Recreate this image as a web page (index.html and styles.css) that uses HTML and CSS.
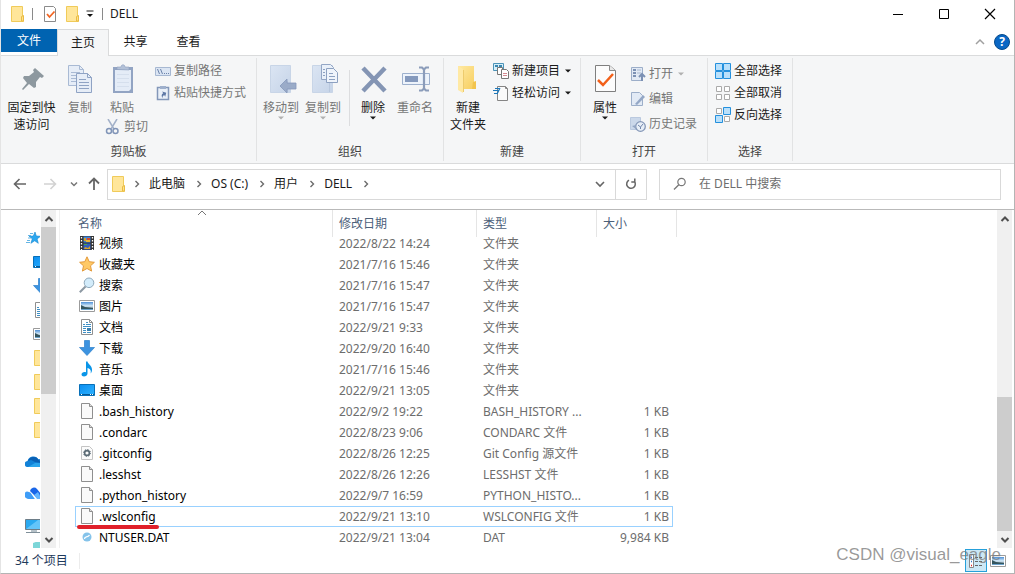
FILE: index.html
```html
<!DOCTYPE html>
<html lang="zh-CN">
<head>
<meta charset="utf-8">
<title>DELL</title>
<link rel="stylesheet" href="styles.css">
</head>
<body>
<svg class="defs" aria-hidden="true">
  <defs>
    <linearGradient id="gBlue" x1="0" y1="0" x2="1" y2="1"><stop offset="0" stop-color="#dbe5f3"/><stop offset="1" stop-color="#c6d4e8"/></linearGradient>
    <linearGradient id="gFolder" x1="0" y1="0" x2="1" y2="1"><stop offset="0" stop-color="#ffe9a2"/><stop offset="1" stop-color="#f6cd5c"/></linearGradient>
    <linearGradient id="gScreen" x1="0" y1="0" x2="1" y2="1"><stop offset="0" stop-color="#0b8df0"/><stop offset="1" stop-color="#2fb4ff"/></linearGradient>
    <linearGradient id="gSky" x1="0" y1="0" x2="0" y2="1"><stop offset="0" stop-color="#4d8fd6"/><stop offset=".5" stop-color="#d8ecf8"/><stop offset="1" stop-color="#2c4a5c"/></linearGradient>
  </defs>
  <symbol id="folder" viewBox="0 0 16 16"><path d="M1.500 .5h11v10.500h1v4.500h-12z" fill="#ffe69a" stroke="#f0cb5a"/><path d="M11.500 15v-4.500l2-1v5.500z" fill="#ffe08a" stroke="#e9bc43"/></symbol>
  <symbol id="file" viewBox="0 0 16 16"><path d="M2.500 .5h8l3 3v12h-11z" fill="#fafafa" stroke="#8f8f8f"/><path d="M10.500 .5v3h3" fill="#ddd" stroke="#8f8f8f"/></symbol>
  <symbol id="check" viewBox="0 0 16 16"><path d="M2.500 .5h9l2 2v13h-11z" fill="#fff" stroke="#8b8b8b"/><path d="M5 8l2.500 3 5-5.500" fill="none" stroke="#f26522" stroke-width="1.800"/></symbol>
  <symbol id="video" viewBox="0 0 16 16"><path d="M1 1h14v14H1z" fill="#343434"/><path d="M4.500 1.500h7v6h-7z" fill="#3f83db"/><path d="M4.500 8.500h7v6h-7z" fill="#325fc0"/><path d="M5 3h2v3H5zM6 12l3 1 2-2v3H5z" fill="#d6a128"/><path d="M8 3h3v2H8z" fill="#d94c2c"/><path d="M7 5h4v2H7z" fill="#e7b73b"/><path d="M5 9h3v1H5z" fill="#4eaa46"/><path d="M2.500 2v13M13.500 2v13" stroke="#fff" stroke-width="1.300" stroke-dasharray="1.500 1.500"/></symbol>
  <symbol id="star" viewBox="0 0 16 16"><path d="M8 .8l2.200 4.900 5.200.6-3.900 3.500 1.100 5.300L8 12.500l-4.600 2.600 1.100-5.300L.6 6.300l5.200-.6z" fill="#ffc966" stroke="#e39a3b"/></symbol>
  <symbol id="search" viewBox="0 0 16 16"><path d="M.8 15.200l6-6" stroke="#8d99a3" stroke-width="2"/><circle cx="10" cy="5.800" r="4.800" fill="#d3ecfb" stroke="#8faabd"/></symbol>
  <symbol id="picture" viewBox="0 0 16 16"><path d="M.5 2.500h15v11H.5z" fill="#fff" stroke="#9b9b9b"/><path d="M2 4h12v8H2z" fill="url(#gSky)"/><path d="M2 7l4 2 8 1v1H2z" fill="#35565f"/><path d="M2 11h12v1H2z" fill="#6da3cc"/></symbol>
  <symbol id="doc" viewBox="0 0 16 16"><path d="M2.500 .5h8l3 3v12h-11z" fill="#fff" stroke="#8f8f8f"/><path d="M10.500 .5v3h3" fill="none" stroke="#8f8f8f"/><path d="M4 5.500h2M7 3.500h2M7 5.500h5M4 7.500h8M4 9.500h3M4 11.500h3M4 13.500h3" stroke="#3f8fc4"/><path d="M8 9h4v3H8z" fill="#3b7fae"/><path d="M8 13.500h4" stroke="#3f8fc4"/></symbol>
  <symbol id="down" viewBox="0 0 16 16"><path d="M5.500 .5h5v7h5L8 15.500.5 7.500h5z" fill="#3c93e0" stroke="#2c7fcb" stroke-width=".7"/></symbol>
  <symbol id="music" viewBox="0 0 16 16"><path d="M7 .5h1.500C9 3.500 13.500 4.500 13 9.500c-.2 1.500-1 2.500-1.500 3 1-3-.5-5-3-5.500v5.500c0 3.500-6 4-6 1 0-2.200 2.500-3 4.500-2.200z" fill="#0a95e8"/></symbol>
  <symbol id="desktop" viewBox="0 0 16 16"><path d="M.5 2.500h15v11H.5z" fill="url(#gScreen)" stroke="#0870b8"/><path d="M1 12.500h14" stroke="#075a96"/><path d="M2 12.500h1M11 12.500h1M13 12.500h1" stroke="#fff"/></symbol>
  <symbol id="gear" viewBox="0 0 16 16"><path d="M2.500 1.500h8l3 3v10h-11z" fill="#fbfbfb" stroke="#c4c4c4"/><circle cx="8" cy="8" r="2.400" fill="none" stroke="#5b6b75" stroke-width="1.600"/><circle cx="8" cy="8" r="3.500" fill="none" stroke="#5b6b75" stroke-dasharray="1.200 1.550"/></symbol>
  <symbol id="dat" viewBox="0 0 16 16"><circle cx="8" cy="8" r="4.500" fill="#85c3ea"/><path d="M5.500 10c0-3 3-1 5-4" fill="none" stroke="#fff" stroke-width="1.300"/></symbol>
  <symbol id="pinstar" viewBox="0 0 16 16"><path d="M9 2l1.300 4 4.200.3-3.400 2.600 1.200 4.400-3.600-2.500-3.800 2.500 1.400-4.500L3 6.300l4.300-.3z" fill="#2aa7f0" stroke="#1787cf" stroke-width=".6"/><path d="M4 3.500h3M2 5.500h3M2 8h3M1 10.500h3M0 12.500h4" stroke="#55aee2" stroke-width=".9"/></symbol>
  <symbol id="cloud" viewBox="0 0 20 16"><path d="M3 13a3 3 0 0 1-.5-6 6 6 0 0 1 11-1.500 4 4 0 0 1 3 7.500z" fill="#1181d7"/><path d="M3 7a6 6 0 0 1 10.500-1.500L16 9l-6-1-4-2z" fill="#0a60b4"/><path d="M3 13l7-4 7 0 0 4z" fill="#2aa4ec"/></symbol>
  <symbol id="cloud2" viewBox="0 0 20 16"><path d="M1 12a3 3 0 0 1 3-6c2 0 4 5 6 7H4a4 4 0 0 1-3-1z" fill="#3f9df7"/><path d="M5 5a4 4 0 0 1 7-2l4 5a3 3 0 0 1 1 5h-4z" fill="#1a66e8"/><path d="M9 9l4-3 4 7h-5z" fill="#63b5ff"/></symbol>
  <symbol id="pc" viewBox="0 0 20 16"><path d="M.5 1.500h17v10H.5z" fill="#2aa9f0" stroke="#6d7d88"/><path d="M1 11L13 2h4v9z" fill="#63c5fa"/><path d="M6 12h6v2H6z" fill="#b7c2c9"/><path d="M1 14.500h16" stroke="#7f8f99"/></symbol>
  <symbol id="cube" viewBox="0 0 20 16"><path d="M8 1l8-3 4 2v10l-8 2-4-4z" fill="#7cd6d8"/></symbol>
  <symbol id="chev" viewBox="0 0 8 8"><path d="M2.500 1l3 3-3 3" fill="none" stroke="#6b6b6b" stroke-width="1.400"/></symbol>
  <symbol id="arrUp" viewBox="0 0 10 8"><path d="M1.500 6L5 2.500 8.500 6" fill="none" stroke="#4f4f4f" stroke-width="2"/></symbol>
  <symbol id="arrDown" viewBox="0 0 10 8"><path d="M1.500 2L5 5.500 8.500 2" fill="none" stroke="#4f4f4f" stroke-width="2"/></symbol>
  <symbol id="tri" viewBox="0 0 6 4"><path d="M0 .5h6L3 3.500z" fill="currentColor"/></symbol>
</svg>

<div class="window">
  <header class="titlebar">
    <svg class="i16"><use href="#folder"/></svg>
    <span class="rule"></span>
    <button class="quick" aria-label="属性"><svg class="i16"><use href="#check"/></svg></button>
    <button class="quick" aria-label="新建文件夹"><svg class="i16"><use href="#folder"/></svg></button>
    <button class="quick more" aria-label="自定义快速访问工具栏"><svg width="8" height="8" viewBox="0 0 8 8"><path d="M.5 1h7" stroke="#222"/><path d="M1 4h6L4 7z" fill="#111"/></svg></button>
    <span class="rule"></span>
    <h1>DELL</h1>
    <div class="controls">
      <button aria-label="最小化"><svg width="12" height="12"><path d="M1 6.500h10" stroke="#000"/></svg></button>
      <button aria-label="最大化"><svg width="12" height="12"><path d="M1.500 1.500h9v9h-9z" fill="none" stroke="#000"/></svg></button>
      <button aria-label="关闭"><svg width="12" height="12"><path d="M1 1l10 10M11 1L1 11" stroke="#000" stroke-width="1.200"/></svg></button>
    </div>
  </header>

  <nav class="tabs">
    <button class="tab file">文件</button>
    <button class="tab active">主页</button>
    <button class="tab">共享</button>
    <button class="tab">查看</button>
    <button class="collapse" aria-label="最小化功能区"><svg width="10" height="8"><path d="M1 6l4-4 4 4" fill="none" stroke="#a0a0a0" stroke-width="1.500"/></svg></button>
    <button class="help" aria-label="帮助">?</button>
  </nav>

  <section class="ribbon">
    <div class="group clip">
      <div class="tools">
        <button class="big wide"><svg class="i32" viewBox="0 0 32 32"><path d="M19 4l9 8-2 2-2-1-4 5 0 5-2 1-5-4-6 6-1-1 5-6-4-5 1-2 5 0 5-4-1-2z" fill="#8d989f"/></svg>固定到快<br>速访问</button>
        <button class="big off"><svg class="i32" viewBox="0 0 32 32"><path d="M4.500 1.500h11l4 4v16h-15z" fill="#e6edf7" stroke="#a9bad4"/><path d="M15.500 1.500v4h4M7 8.500h9M7 11.500h5M7 14.500h5M7 17.500h5" stroke="#a9bad4" fill="none"/><path d="M12.500 9.500h11l4 4v15h-15z" fill="#e6edf7" stroke="#8fa3c4"/><path d="M23.500 9.500v4h4M15 15.500h7M15 18.500h10M15 21.500h10M15 24.500h10" stroke="#8fa3c4" fill="none"/></svg>复制</button>
        <div class="paste">
          <button class="big off"><svg class="i32" viewBox="0 0 32 32"><path d="M7 3h20v26H7z" fill="#92a4c3"/><path d="M9 6h16v19l-2 2H9z" fill="#e4ecf7"/><path d="M11 5.500V3h4c0-3 4-3 4 0h4v3z" fill="#b2c0d7" stroke="#8d9fbe" stroke-width=".6"/><path d="M11 10.500h12M11 14.500h12M11 18.500h12M11 22.500h12" stroke="#d5dfed"/></svg>粘贴</button>
          <button class="row off cut"><svg class="i16" viewBox="0 0 16 16"><path d="M3 0l6 10M12 0L6 10" stroke="#a3b1c9" stroke-width="1.500"/><circle cx="4" cy="12" r="2.500" fill="none" stroke="#8195b8" stroke-width="1.500"/><circle cx="10.500" cy="12" r="2.500" fill="none" stroke="#8195b8" stroke-width="1.500"/></svg>剪切</button>
        </div>
        <div class="stack">
          <button class="row off"><svg class="i16" viewBox="0 0 16 16"><path d="M.5 4.500h15v8H.5z" fill="#dbe5f3" stroke="#a7b8d2"/><path d="M2.500 6l2 5M5.500 6l2 5" stroke="#6c83aa"/><path d="M9 10.500h1M11 10.500h1M13 10.500h1" stroke="#6c83aa"/></svg>复制路径</button>
          <button class="row off"><svg class="i16" viewBox="0 0 16 16"><path d="M2.500 2.500h11v12h-11z" fill="#eaf0f8" stroke="#8397b9" stroke-width="1.500"/><path d="M5 1h6v3H5z" fill="#9fb0cc"/><path d="M5.500 12.500c0-3 1-4 3-4v-2l3 3-3 3v-2c-1 0-2 0-3 2z" fill="#5f79a6" transform="rotate(-30 8 9)"/></svg>粘贴快捷方式</button>
        </div>
      </div>
      <h2>剪贴板</h2>
    </div>

    <div class="group organize">
      <div class="tools">
        <button class="big off"><svg class="i32" viewBox="0 0 32 32"><path d="M5.500 1.500h20v27h-20z" fill="url(#gBlue)" stroke="#c8d5e7"/><path d="M22.500 17v11" stroke="#b9c8de"/><path d="M15 22l7-7v4h9v6h-9v4z" fill="#9aabc8" stroke="#8598ba" stroke-width=".8"/></svg>移动到<svg class="tri"><use href="#tri"/></svg></button>
        <button class="big off"><svg class="i32" viewBox="0 0 32 32"><path d="M5.500 1.500h20v27h-20z" fill="url(#gBlue)" stroke="#c8d5e7"/><path d="M22.500 17v11" stroke="#b9c8de"/><path d="M14.500 .5h9l3 3v12h-12z" fill="#e9f0f9" stroke="#93a6c5"/><path d="M19.500 4.500h7l4 4v10h-11z" fill="#eff4fb" stroke="#8da1c1"/><path d="M22 9.500h4M22 12.500h6M22 15.500h6M16 5.500h2M16 8.500h2M16 11.500h2" stroke="#8da1c1"/></svg>复制到<svg class="tri"><use href="#tri"/></svg></button>
        <span class="split"></span>
        <button class="big"><svg class="i32" viewBox="0 0 32 32"><path d="M6 4l22 23M28 4L6 27" stroke="#8495b4" stroke-width="4.500"/></svg>删除<svg class="tri"><use href="#tri"/></svg></button>
        <button class="big off"><svg class="i32" viewBox="0 0 32 32"><path d="M3.500 9.500h27v11h-27z" fill="#edf3fb" stroke="#9db0cd"/><path d="M6 12h13v6H6z" fill="#8499bd"/><path d="M20 3.500h3l2 2 2-2h3M25 5v20M20 26.500h3l2-2 2 2h3" fill="none" stroke="#8b9cba" stroke-width="2.200"/></svg>重命名</button>
      </div>
      <h2>组织</h2>
    </div>

    <div class="group create">
      <div class="tools">
        <button class="big"><svg class="i32" viewBox="0 0 32 32"><path d="M6 2h16v17h2v6H6z" fill="url(#gFolder)"/><path d="M6 2l5 3v24l-5-3z" fill="#ffe9a4"/><path d="M11.500 6v22" stroke="#edcb6d"/><path d="M20 25l1-7 3-1v8z" fill="#f2c44e"/></svg>新建<br>文件夹</button>
        <div class="stack">
          <button class="row"><svg class="i16" viewBox="0 0 16 16"><path d="M.5 .5h10v7H.5z" fill="#d5effa" stroke="#4b93b8"/><path d="M2 2h3v2H2zM6 2h3v2H6z" fill="#3a86b0"/><path d="M4.500 4.500h5v7h-5z" fill="#fff" stroke="#777"/><path d="M8.500 6.500h5l2 2v7h-7z" fill="#fff" stroke="#777"/><path d="M10 10.500h4M10 12.500h4" stroke="#d58b93"/></svg>新建项目<svg class="tri"><use href="#tri"/></svg></button>
          <button class="row"><svg class="i16" viewBox="0 0 16 16"><path d="M4.500 1.500h8l2 2v12h-10z" fill="#fafafa" stroke="#858585"/><path d="M12.500 1.500v2h2" fill="none" stroke="#858585"/><path d="M2 3.500h5M0 5.500h6M1 8.500h4M7 3l-3 6" stroke="#1e78ba" stroke-width="1.200"/></svg>轻松访问<svg class="tri"><use href="#tri"/></svg></button>
        </div>
      </div>
      <h2>新建</h2>
    </div>

    <div class="group open">
      <div class="tools">
        <button class="big"><svg class="i32" viewBox="0 0 32 32"><path d="M6.500 1.500h14l6 5v21h-20z" fill="#fcfcfc" stroke="#7f7f7f"/><path d="M20.500 1.500v5h6" fill="#e8e8e8" stroke="#8a8a8a"/><path d="M9 16l5 5 10-11" fill="none" stroke="#f2601a" stroke-width="2.500"/></svg>属性<svg class="tri"><use href="#tri"/></svg></button>
        <div class="stack loose">
          <button class="row off"><svg class="i16" viewBox="0 0 16 16"><path d="M1.500 1.500h11v13h-11z" fill="#e2eaf5" stroke="#9caec9"/><path d="M3 4h3M3 7h3M3 10h3" stroke="#7c91b4" stroke-width="2"/><path d="M7 4h4M7 7h4" stroke="#a7b7d0"/><path d="M12 15V9M9 11l3-3 3 3" fill="none" stroke="#7c91b4" stroke-width="2"/></svg>打开<svg class="tri"><use href="#tri"/></svg></button>
          <button class="row off"><svg class="i16" viewBox="0 0 16 16"><path d="M1.500 1.500h8l3 3v10h-11z" fill="#e2eaf5" stroke="#9caec9"/><path d="M5 13l8-9 2 2-8 8z" fill="#94a7c6"/></svg>编辑</button>
          <button class="row off"><svg class="i16" viewBox="0 0 16 16"><path d="M.5 1.500h10v12H.5z" fill="#cbd8ea" stroke="#bac9df"/><circle cx="10.500" cy="10.500" r="4.800" fill="#e7eef7" stroke="#8497b7" stroke-width="1.300"/><path d="M8 9l2.500 2 2.500-3M10.500 11v2" fill="none" stroke="#7287ab"/><path d="M2 10l4-1v4z" fill="#92a5c3"/></svg>历史记录</button>
        </div>
      </div>
      <h2>打开</h2>
    </div>

    <div class="group select">
      <div class="tools">
        <div class="stack">
          <button class="row"><svg class="i16" viewBox="0 0 16 16"><path d="M.5 .5h7v7h-7zM8.500 .5h7v7h-7zM.5 8.500h7v7h-7zM8.500 8.500h7v7h-7z" fill="#b9e0fb" stroke="#2490dd"/></svg>全部选择</button>
          <button class="row"><svg class="i16" viewBox="0 0 16 16"><path d="M1.500 1.500h5v5h-5zM9.500 1.500h5v5h-5zM1.500 9.500h5v5h-5zM9.500 9.500h5v5h-5z" fill="#fff" stroke="#aaa"/></svg>全部取消</button>
          <button class="row"><svg class="i16" viewBox="0 0 16 16"><path d="M1.500 1.500h5v5h-5zM9.500 9.500h5v5h-5z" fill="#fff" stroke="#aaa"/><path d="M8.500 .5h7v7h-7zM.5 8.500h7v7h-7z" fill="#b9e0fb" stroke="#2490dd"/></svg>反向选择</button>
        </div>
      </div>
      <h2>选择</h2>
    </div>
  </section>

  <div class="navbar">
    <button class="arrow" aria-label="后退"><svg width="14" height="12"><path d="M13 6H2M6.500 1L1.500 6l5 5" fill="none" stroke="#666" stroke-width="1.600"/></svg></button>
    <button class="arrow" aria-label="前进"><svg width="14" height="12"><path d="M1 6h11M7.500 1l5 5-5 5" fill="none" stroke="#d2d2d2" stroke-width="1.600"/></svg></button>
    <button class="recent" aria-label="最近位置"><svg width="8" height="6"><path d="M1 1.500l3 3 3-3" fill="none" stroke="#777" stroke-width="1.500"/></svg></button>
    <button class="up" aria-label="上移"><svg width="12" height="14"><path d="M6 13V2M1 6.500l5-5 5 5" fill="none" stroke="#666" stroke-width="1.800"/></svg></button>
    <div class="address">
      <svg class="i16"><use href="#folder"/></svg>
      <svg class="sep"><use href="#chev"/></svg>
      <a href="#pc">此电脑</a><svg class="sep"><use href="#chev"/></svg>
      <a href="#c">OS (C:)</a><svg class="sep"><use href="#chev"/></svg>
      <a href="#users">用户</a><svg class="sep"><use href="#chev"/></svg>
      <a href="#dell">DELL</a><svg class="sep"><use href="#chev"/></svg>
      <button class="drop" aria-label="以前的位置"><svg width="10" height="8"><path d="M1 2l4 4 4-4" fill="none" stroke="#666" stroke-width="1.600"/></svg></button>
      <button class="refresh" aria-label="刷新"><svg width="12" height="12"><path d="M9.500 3.500A4.300 4.300 0 1 1 4 2.200M9.800 .5v3.500H6.300" fill="none" stroke="#666" stroke-width="1.500"/></svg></button>
    </div>
    <label class="find">
      <svg width="14" height="14"><circle cx="8.500" cy="5" r="3.700" fill="none" stroke="#777" stroke-width="1.200"/><path d="M5.800 7.700L1 12.500" stroke="#777" stroke-width="1.300"/></svg>
      <input type="search" placeholder="在 DELL 中搜索" aria-label="搜索">
    </label>
  </div>

  <main class="content">
    <aside class="tree">
      <ul>
        <li class="pinned"><svg class="i16"><use href="#pinstar"/></svg></li>
        <li><svg class="i16"><use href="#desktop"/></svg></li>
        <li><svg class="i16"><use href="#down"/></svg></li>
        <li><svg class="i16"><use href="#doc"/></svg></li>
        <li><svg class="i16"><use href="#picture"/></svg></li>
        <li><svg class="i16"><use href="#folder"/></svg></li>
        <li><svg class="i16"><use href="#folder"/></svg></li>
        <li><svg class="i16"><use href="#folder"/></svg></li>
        <li><svg class="i16"><use href="#folder"/></svg></li>
        <li class="root first"><svg class="i20"><use href="#cloud"/></svg></li>
        <li class="root"><svg class="i20"><use href="#cloud2"/></svg></li>
        <li class="root"><svg class="i20"><use href="#pc"/></svg></li>
        <li class="child"><svg class="i20"><use href="#cube"/></svg></li>
      </ul>
      <div class="scroll">
        <svg class="sarrow"><use href="#arrUp"/></svg>
        <div class="track"><div class="thumb top"></div></div>
        <svg class="sarrow"><use href="#arrDown"/></svg>
      </div>
    </aside>

    <div class="list">
      <svg class="sorted" viewBox="0 0 10 6"><path d="M1 5l4-4 4 4" fill="none" stroke="#777"/></svg>
      <table>
        <colgroup><col class="c-name"><col class="c-date"><col class="c-type"><col class="c-size"></colgroup>
        <thead><tr><th>名称</th><th>修改日期</th><th>类型</th><th>大小</th></tr></thead>
        <tbody>
          <tr><td><svg class="i16"><use href="#video"/></svg>视频</td><td>2022/8/22 14:24</td><td>文件夹</td><td></td></tr>
          <tr><td><svg class="i16"><use href="#star"/></svg>收藏夹</td><td>2021/7/16 15:46</td><td>文件夹</td><td></td></tr>
          <tr><td><svg class="i16"><use href="#search"/></svg>搜索</td><td>2021/7/16 15:47</td><td>文件夹</td><td></td></tr>
          <tr><td><svg class="i16"><use href="#picture"/></svg>图片</td><td>2021/7/16 15:47</td><td>文件夹</td><td></td></tr>
          <tr><td><svg class="i16"><use href="#doc"/></svg>文档</td><td>2022/9/21 9:33</td><td>文件夹</td><td></td></tr>
          <tr><td><svg class="i16"><use href="#down"/></svg>下载</td><td>2022/9/20 16:40</td><td>文件夹</td><td></td></tr>
          <tr><td><svg class="i16"><use href="#music"/></svg>音乐</td><td>2021/7/16 15:46</td><td>文件夹</td><td></td></tr>
          <tr><td><svg class="i16"><use href="#desktop"/></svg>桌面</td><td>2022/9/21 13:05</td><td>文件夹</td><td></td></tr>
          <tr><td><svg class="i16"><use href="#file"/></svg>.bash_history</td><td>2022/9/2 19:22</td><td>BASH_HISTORY ...</td><td>1 KB</td></tr>
          <tr><td><svg class="i16"><use href="#file"/></svg>.condarc</td><td>2022/8/23 9:06</td><td>CONDARC 文件</td><td>1 KB</td></tr>
          <tr><td><svg class="i16"><use href="#gear"/></svg>.gitconfig</td><td>2022/8/26 12:25</td><td>Git Config 源文件</td><td>1 KB</td></tr>
          <tr><td><svg class="i16"><use href="#file"/></svg>.lesshst</td><td>2022/8/26 12:26</td><td>LESSHST 文件</td><td>1 KB</td></tr>
          <tr><td><svg class="i16"><use href="#file"/></svg>.python_history</td><td>2022/9/7 16:59</td><td>PYTHON_HISTO...</td><td>1 KB</td></tr>
          <tr class="selected"><td><svg class="i16"><use href="#file"/></svg>.wslconfig<span class="mark"></span></td><td>2022/9/21 13:10</td><td>WSLCONFIG 文件</td><td>1 KB</td></tr>
          <tr><td><svg class="i16"><use href="#dat"/></svg>NTUSER.DAT</td><td>2022/9/21 13:04</td><td>DAT</td><td>9,984 KB</td></tr>
        </tbody>
      </table>
    </div>

    <div class="scroll">
      <svg class="sarrow"><use href="#arrUp"/></svg>
      <div class="track"><div class="thumb bottom"></div></div>
      <svg class="sarrow"><use href="#arrDown"/></svg>
    </div>
  </main>

  <footer class="status">
    <span class="count">34 个项目</span>
    <span class="views">
      <button class="view on" aria-label="详细信息"><svg class="i16" viewBox="0 0 16 16"><path d="M1.500 1.500h4v13h-4z" fill="#fff" stroke="#888"/><path d="M3 4.500h1" stroke="#2b78c8" stroke-width="1.500"/><path d="M3 8.500h1" stroke="#2b78c8" stroke-width="1.500"/><path d="M3 12.500h1" stroke="#d22" stroke-width="1.500"/><path d="M7 4.500h3M11 4.500h3M7 8.500h3M11 8.500h3M7 12.500h3M11 12.500h3" stroke="#666"/></svg></button>
      <button class="view" aria-label="大图标"><svg class="i16"><use href="#picture"/></svg></button>
    </span>
    <span class="watermark">CSDN @visual_eagle</span>
  </footer>
</div>
</body>
</html>
```
FILE: styles.css
```css
* { box-sizing: border-box; }

body {
  margin: 0;
  background: #fff;
  color: #1a1a1a;
  font: 12px/16px "Noto Sans", "Noto Sans CJK SC", sans-serif;
}

button {
  padding: 0;
  border: 0;
  background: none;
  color: inherit;
  font: inherit;
}

svg { display: block; flex: none; }
h1, h2 { margin: 0; font-weight: 400; font-size: 12px; }
.defs { position: absolute; width: 0; height: 0; }
.i16 { width: 16px; height: 16px; }
.i20 { width: 20px; height: 16px; }
.i32 { width: 32px; height: 32px; }

.window {
  display: flex;
  flex-direction: column;
  min-height: 100vh;
  border-left: 1px solid #e4e4e4;
  border-right: 1px solid #b4b4b4;
  border-bottom: 1px solid #b4b4b4;
}

/* Title bar */
.titlebar { display: flex; align-items: center; height: 29px; padding: 0 1px 2px 9px; }
.titlebar .rule { width: 1px; height: 12px; margin: 0 7px 0 6px; background: #8a8a8a; }
.titlebar .quick { margin-left: 2px; margin-right: 5px; }
.titlebar .quick.more { margin: 0 2px 0 0; }
.controls { display: flex; margin-left: auto; }
.controls button { display: grid; place-items: center; width: 46px; height: 27px; }

/* Tabs */
.tabs { display: flex; height: 27px; border-bottom: 1px solid #dadbdc; }
.tab { width: 53px; height: 26px; }
.tab.file { width: 56px; height: 23px; background: #0063b1; color: #fff; }
.tab.active { width: 52px; height: 27px; border: 1px solid #dadbdc; border-bottom: 0; background: #f5f6f7; }
.collapse { margin-left: auto; padding: 0 9px 0 0; }
.help {
  align-self: center;
  width: 16px;
  height: 16px;
  margin-right: 4px;
  border: 1px solid #064b8c;
  border-radius: 50%;
  background: #0a67c4;
  color: #fff;
  font-weight: 700;
  line-height: 14px;
}

/* Ribbon */
.ribbon { display: flex; height: 108px; padding: 2px 0; border-bottom: 1px solid #dadbdc; background: #f5f6f7; }
.group { display: flex; flex-direction: column; border-right: 1px solid #e2e3e4; }
.group h2 { margin-top: auto; padding-bottom: 1px; color: #444; text-align: center; }
.tools { display: flex; padding: 2px 3px 0; }
.clip { width: 256px; }
.organize { width: 187px; }
.create { width: 137px; }
.open { width: 127px; }
.select { width: 85px; }
.big { display: flex; flex-direction: column; align-items: center; width: 42px; padding-top: 4px; line-height: 17px; white-space: nowrap; align-self: flex-start; }
.big .i32 { margin-bottom: 3px; }
.big.wide { width: 55px; }
.off { color: #767676; }
.off .tri { color: #b0b0b0; }
.tri { width: 6px; height: 4px; }
.row { display: flex; align-items: center; gap: 3px; height: 22px; white-space: nowrap; }
.row .tri { margin-left: 2px; }
.paste { width: 50px; }
.cut { margin: 0 0 0 4px; }
.stack { display: flex; flex-direction: column; padding-left: 4px; }
.stack.loose { padding-top: 3px; gap: 3px; }
.split { width: 1px; height: 56px; margin: 10px 2px 0 5px; background: #dcdddf; }

/* Address row */
.navbar { display: flex; align-items: center; height: 46px; padding: 0 13px 5px 9px; border-bottom: 1px solid #b9b9b9; }
.arrow { width: 30px; padding-left: 3px; }
.recent { width: 11px; }
.up { width: 26px; padding-left: 7px; }
.address { display: flex; flex: 1 1 540px; align-items: center; height: 31px; padding-left: 3px; border: 1px solid #d9d9d9; }
.address a { margin: 0 10px 0 8px; color: #1a1a1a; text-decoration: none; white-space: nowrap; }
.sep { width: 8px; height: 8px; }
.address .i16 { margin-right: 6px; }
.drop { width: 32px; margin-left: auto; padding-left: 12px; }
.refresh { display: grid; place-items: center; align-self: stretch; width: 31px; border-left: 1px solid #d9d9d9; }
.find { display: flex; flex: 1 1 342px; align-items: center; gap: 12px; height: 31px; margin-left: 12px; padding-left: 13px; border: 1px solid #d9d9d9; }
.find input { flex: 1; min-width: 0; padding: 0; border: 0; outline: 0; background: none; font: inherit; }
.find input::placeholder { color: #6d6d6d; opacity: 1; }

/* Content */
.content { display: flex; flex: 1; min-height: 338px; }
.tree { display: flex; width: 59px; padding-right: 3px; border-right: 1px solid #f0f0f0; }
.tree ul { flex: 1; height: 338px; margin: 0 1px 0 0; padding: 16px 0 0; overflow: hidden; list-style: none; }
.tree li { display: flex; align-items: center; height: 24px; padding-left: 32px; }
.tree li.pinned { padding-left: 25px; }
.tree li.root { height: 32px; padding-left: 24px; }
.tree li.first { margin-top: 4px; }
.tree li.child { height: 16px; padding-left: 24px; }
.scroll { display: flex; flex-direction: column; width: 15px; background: #f0f0f0; }
.sarrow { width: 10px; height: 8px; margin: 5px auto 4px; }
.track { display: flex; flex: 1; flex-direction: column; }
.thumb { background: #cdcdcd; }
.thumb.top { height: 55%; }
.thumb.bottom { height: 44%; margin-top: auto; }
.content > .scroll { margin-right: 2px; }

.list { position: relative; flex: 1; min-width: 0; padding-left: 15px; }
.sorted { position: absolute; top: 0; left: 137px; width: 10px; height: 6px; }
table { width: 598px; border-collapse: separate; border-spacing: 0; table-layout: fixed; }
.c-name { width: 257px; }
.c-date { width: 144px; }
.c-type { width: 120px; }
.c-size { width: 77px; }
th { position: relative; height: 23px; padding: 4px 0 0 7px; color: #4c607a; font-weight: 400; line-height: 19px; text-align: left; }
th:first-child { padding-left: 3px; }
th::after { content: ""; position: absolute; top: 0; right: -1px; width: 1px; height: 27px; background: #e5e5e5; }
th:last-child::after { right: -4px; }
td { position: relative; height: 21px; padding: 0 0 0 7px; color: #6d6d6d; line-height: 21px; white-space: nowrap; }
td:first-child { padding-left: 24px; color: #000; }
td:last-child { padding: 0 4px 0 0; text-align: right; }
td .i16 { float: left; margin: 2px 4px 0 -20px; }
.selected { outline: 1px solid #99d1ff; outline-offset: -1px; }
.mark { position: absolute; left: 2px; bottom: -2px; width: 82px; height: 4px; border-radius: 2px; background: #e0202a; }

/* Status bar */
.status { position: relative; display: flex; align-items: center; height: 25px; padding: 0 5px 0 14px; color: #1e395b; }
.count { width: 65px; border-right: 1px solid #ececec; white-space: nowrap; }
.views { display: flex; margin-left: auto; }
.view { display: grid; place-items: center; width: 22px; height: 23px; border: 1px solid transparent; }
.view.on { border-color: #26a0da; background: #cbe8f6; }
.watermark { position: absolute; right: 13px; bottom: 7px; color: rgba(120, 120, 120, .75); font: 17px/22px "Liberation Sans", sans-serif; }
```
